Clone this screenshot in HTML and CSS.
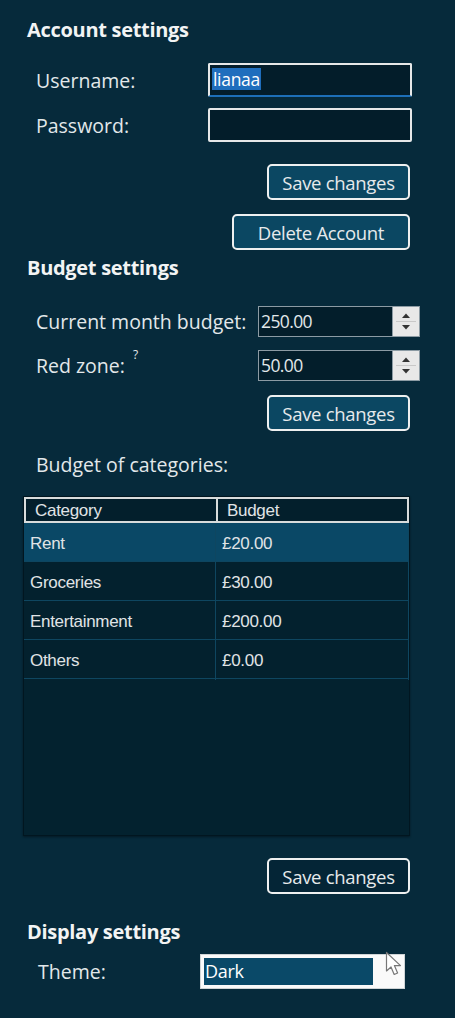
FILE: index.html
```html
<!DOCTYPE html>
<html>
<head>
<meta charset="utf-8">
<link rel="stylesheet" href="styles.css">
</head>
<body>
<div class="page">
  <h2 class="heading h-account">Account settings</h2>
  <div class="row row-user">
    <span class="label">Username:</span>
    <div class="textbox focused"><span class="sel">lianaa</span></div>
  </div>
  <div class="row row-pass">
    <span class="label">Password:</span>
    <div class="textbox"></div>
  </div>
  <div class="btn-line gap-save1"><button class="btn btn-save">Save changes</button></div>
  <div class="btn-line gap-del"><button class="btn btn-delete">Delete Account</button></div>

  <h2 class="heading h-budget">Budget settings</h2>
  <div class="row row-month">
    <span class="label label-wide">Current month budget:</span>
    <div class="spinner">
      <div class="spin-input">250.00</div>
      <div class="spin-btns">
        <svg width="26" height="29" viewBox="0 0 26 29"><path d="M9 11 L13 6.5 L17 11 Z" fill="#333"/><line x1="3" y1="14.5" x2="23" y2="14.5" stroke="#c8c8c8" stroke-width="1"/><path d="M9 18 L13 22.5 L17 18 Z" fill="#333"/></svg>
      </div>
    </div>
  </div>
  <div class="row row-red">
    <span class="label label-wide">Red zone: <sup class="q">?</sup></span>
    <div class="spinner">
      <div class="spin-input">50.00</div>
      <div class="spin-btns">
        <svg width="26" height="29" viewBox="0 0 26 29"><path d="M9 11 L13 6.5 L17 11 Z" fill="#333"/><line x1="3" y1="14.5" x2="23" y2="14.5" stroke="#c8c8c8" stroke-width="1"/><path d="M9 18 L13 22.5 L17 18 Z" fill="#333"/></svg>
      </div>
    </div>
  </div>
  <div class="btn-line gap-save2"><button class="btn btn-save">Save changes</button></div>

  <div class="sub-label">Budget of categories:</div>

  <div class="grid">
    <div class="grid-head">
      <div class="gh gh-cat">Category</div>
      <div class="gh gh-bud">Budget</div>
    </div>
    <div class="grid-row selected"><div class="gc">Rent</div><div class="gc gc2">£20.00</div></div>
    <div class="grid-row"><div class="gc">Groceries</div><div class="gc gc2">£30.00</div></div>
    <div class="grid-row"><div class="gc">Entertainment</div><div class="gc gc2">£200.00</div></div>
    <div class="grid-row"><div class="gc">Others</div><div class="gc gc2">£0.00</div></div>
  </div>

  <div class="btn-line gap-save3"><button class="btn btn-save btn-plain">Save changes</button></div>

  <h2 class="heading h-display">Display settings</h2>
  <div class="row row-theme">
    <span class="label label-theme">Theme:</span>
    <div class="combo">
      <div class="combo-sel">Dark</div>
      <svg class="cursor" width="22" height="28" viewBox="0 0 22 28"><path d="M1.5 1.5 L1.5 20 L6 16 L9.2 23.5 L12.6 22 L9.4 14.6 L15.5 14.6 Z" fill="#fff" stroke="#777" stroke-width="1.2" stroke-linejoin="round"/></svg>
    </div>
  </div>
</div>
</body>
</html>
```
FILE: styles.css
```css
* { box-sizing: border-box; }
html, body { margin: 0; padding: 0; }
body {
  background: #062a3b;
  width: 455px;
  height: 1018px;
  overflow: hidden;
  font-family: "Open Sans", "Noto Sans", sans-serif;
  color: #e2e8ea;
}
.page {
  display: flex;
  flex-direction: column;
  padding: 19px 0 0 23px;
  width: 412px;
  box-sizing: content-box;
}
.heading {
  margin: 0;
  padding-left: 4px;
  font-size: 20px;
  font-weight: 700;
  line-height: 22px;
  height: 22px;
  color: #f2f4f4;
  letter-spacing: -0.3px;
}
.row {
  display: flex;
  align-items: center;
}
.label {
  width: 185px;
  padding-left: 13px;
  font-size: 19.5px;
  flex: none;
  white-space: nowrap;
}
.label-wide { width: 235px; }
.label-theme { width: 177px; padding-left: 15px; }
.row-user { margin-top: 22px; }
.row-pass { margin-top: 11px; }
.textbox {
  width: 204px;
  height: 34px;
  border: 2px solid #e6e8e8;
  border-radius: 2px;
  background: #031d2a;
  padding: 3px 2px;
  display: flex;
  align-items: flex-start;
}
.textbox.focused { border-bottom-color: #1d6fb8; }
.sel {
  background: #1f6ebd;
  color: #fff;
  font-size: 17.5px;
  line-height: 22px;
  padding: 0 1px;
  letter-spacing: -0.3px;
}
.btn-line {
  display: flex;
  justify-content: flex-end;
  padding-right: 25px;
}
.gap-save1 { margin-top: 22px; }
.gap-del { margin-top: 14px; }
.gap-save2 { margin-top: 14px; }
.gap-save3 { margin-top: 22px; }
.btn {
  height: 36px;
  border: 2.5px solid #eef0f0;
  border-radius: 5px;
  background: #0b4762;
  color: #e6eaec;
  font-family: "Open Sans", "Noto Sans", sans-serif;
  font-size: 18.5px;
  letter-spacing: -0.3px;
  padding: 0;
}
.btn-save { width: 143px; }
.btn-delete { width: 178px; }
.btn-plain { background: #042536; }
.h-budget { margin-top: 7px; }
.row-month { margin-top: 27px; }
.row-red { margin-top: 13px; }
.spinner {
  display: flex;
  width: 162px;
  height: 31px;
  border: 1px solid #8c9ba4;
  background: #031e2b;
}
.spin-input {
  flex: 1;
  font-size: 17.5px;
  line-height: 29px;
  padding-left: 2px;
  letter-spacing: -0.6px;
  color: #e2e8ea;
  border-right: 1px solid #8c9ba4;
}
.spin-btns {
  width: 26px;
  background: #e8e8e8;
}
.spin-btns svg { display: block; }
.q {
  font-size: 12px;
  vertical-align: top;
  position: relative;
  top: -6px;
  margin-left: 3px;
}
.sub-label {
  margin-top: 23px;
  padding-left: 13px;
  font-size: 19.5px;
  line-height: 22px;
}
.grid {
  margin-top: 20px;
  width: 387px;
  height: 340px;
  background: #03222f;
  border: 1px solid #011620;
  box-shadow: 0 1px 2px rgba(0,0,0,0.4);
  font-family: "Liberation Sans", Arial, sans-serif;
  font-size: 17px;
  letter-spacing: -0.3px;
  color: #e0e4e6;
}
.grid-head {
  display: grid;
  grid-template-columns: 192px 1fr;
  height: 26px;
  border: 2px solid #d8dcdc;
  background: #031f2c;
}
.gh {
  line-height: 22px;
  padding-top: 1px;
  padding-left: 9px;
}
.gh-cat { border-right: 2.5px solid #d8dcdc; }
.gh-bud { padding-left: 9px; }
.grid-row {
  display: grid;
  grid-template-columns: 192px 1fr;
  height: 39px;
  border-bottom: 1px solid #0e4660;
  background: #03212e;
}
.grid-row.selected { background: #0a4866; }
.gc {
  line-height: 38px;
  padding-top: 2px;
  padding-left: 6px;
  border-right: 1px solid #0e4660;
}
.gc2 { border-right: 1px solid #0e4660; padding-left: 6px; }
.h-display { margin-top: 27px; }
.row-theme { margin-top: 11px; }
.combo {
  position: relative;
  width: 205px;
  height: 35px;
  background: #fafafa;
  border: 1px solid #cfd4d6;
  padding: 3px;
}
.combo-sel {
  width: 169px;
  height: 27px;
  background: #0a4968;
  color: #fff;
  font-size: 18px;
  line-height: 26px;
  padding-left: 1px;
  letter-spacing: -0.3px;
}
.cursor {
  position: absolute;
  left: 184px;
  top: -4px;
}
```
